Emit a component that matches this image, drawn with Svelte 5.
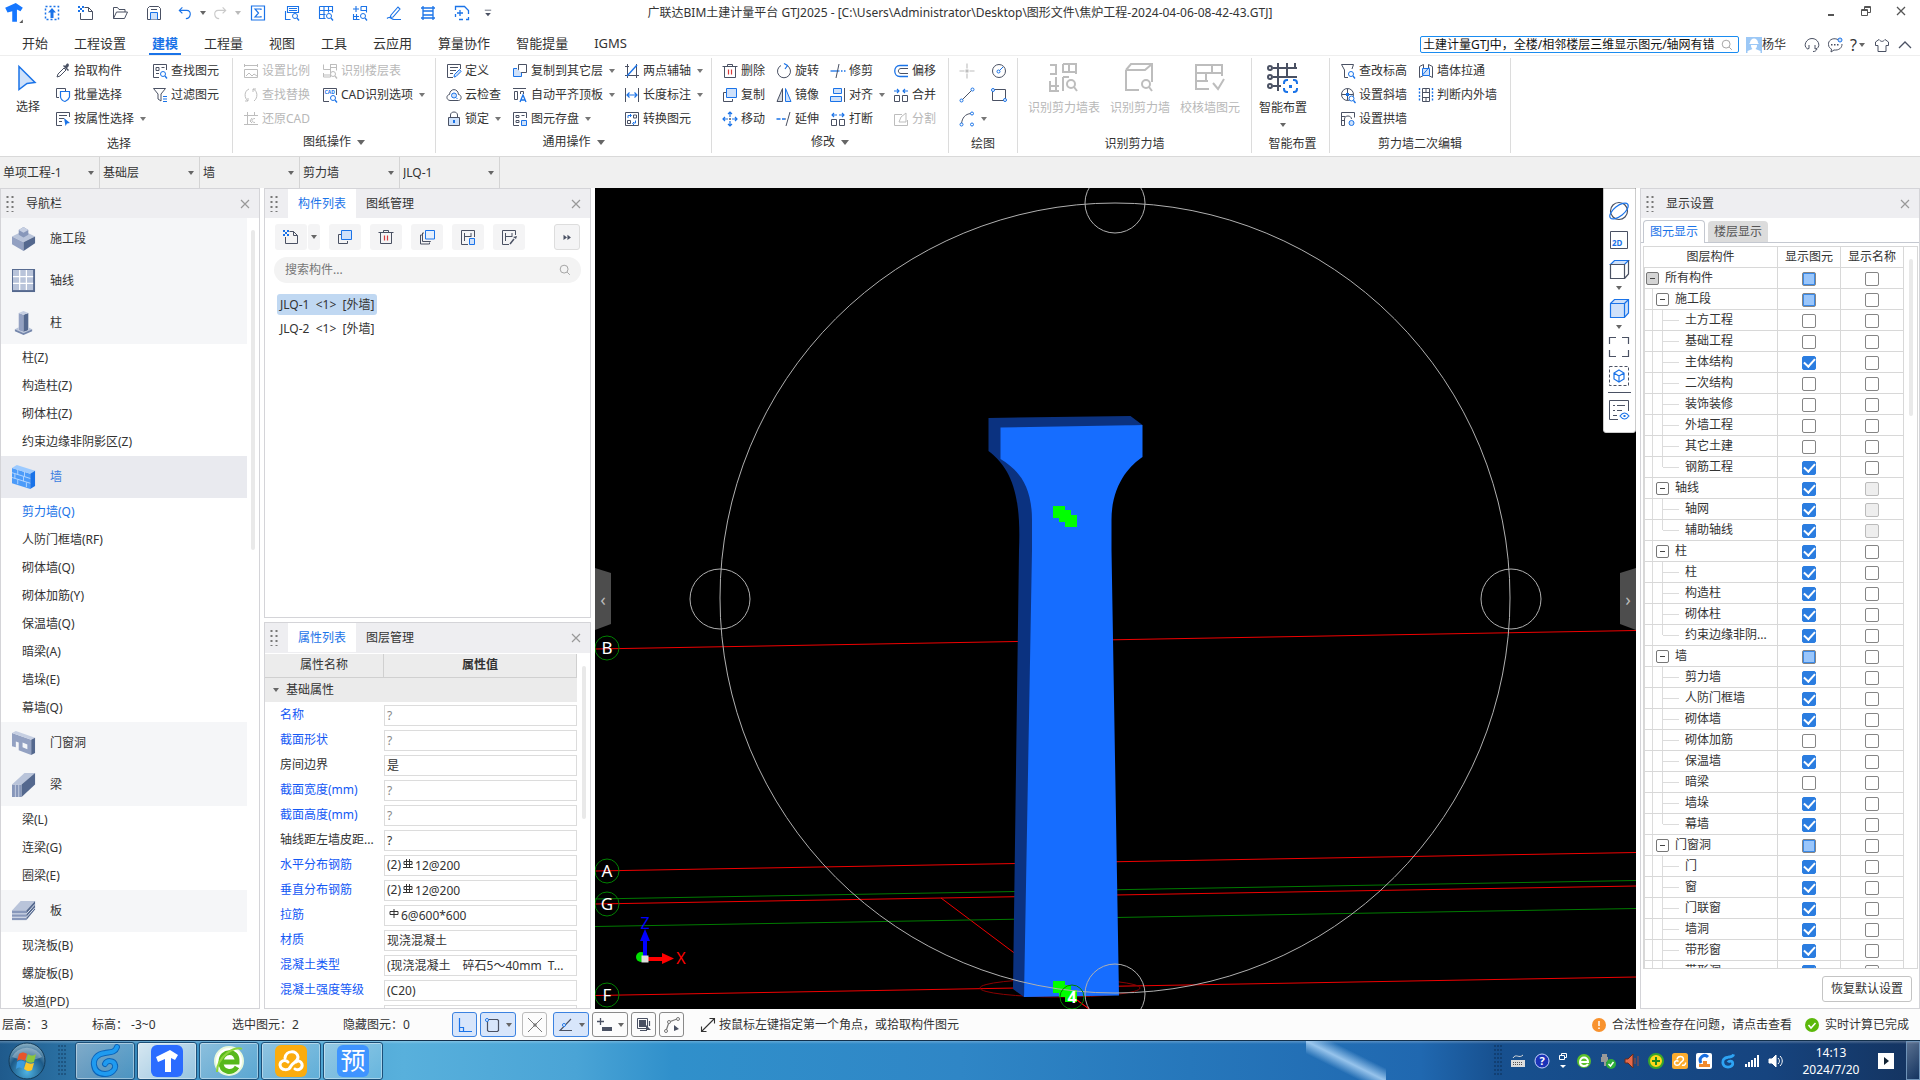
<script>
  const D = '#4a5163', B = '#1a73e8', L = '#cfe1fa', G = '#bdbdbd', R = '#d93a3a';
  const s = (c, d, f = 'none', w = 1) => `<path d="${d}" stroke="${c}" fill="${f}" stroke-width="${w}"/>`;
  const f = (c, d) => `<path d="${d}" fill="${c}" stroke="none"/>`;
  const mag = (c, x = 11, y = 11) => `<circle cx="${x}" cy="${y}" r="2.5" stroke="${c}" fill="#fff"/>` + s(c, `M${x + 2} ${y + 2}l2 2.5`, 'none', 1.3);
  const dot = (c, x, y) => `<circle cx="${x}" cy="${y}" r="1.5" stroke="${c}" fill="#fff"/>`;

  const icons = {
    logo: f('#1677ff', 'M1 4L10 0l6 4-2 3-3-1.500L11 16H7V7L3 8z') + f('#555', 'M16 14v3h-3z'),
    pickup: s(B, 'M1.500 1.500h13v13h-13z', 'none', 1.5).replace('/>', ' stroke-dasharray="2 2"/>') + f(B, 'M8 3l4 4.500H9.500V13h-3V7.500H4z'),
    newfile: s(D, 'M6.500 2.500h4l4 4v8h-12V8M10.500 2.500v4h4') + f(B, 'M0 1h2v2H0zM4 1h2v2H4zM2 3h2v2H2zM0 5h2v2H0zM4 5h2v2H4z'),
    open: s(D, 'M1.500 13.500v-11h4l1.500 2h6v2.500M1.500 13.500l3-6.500h11l-3 6.500z'),
    save: s(D, 'M1.500 3.500l2-2h9l2 2v11h-13z') + s(B, 'M4.500 14.500v-7h7v7', L) + s(D, 'M5 4.500h6'),
    undo: s(B, 'M5 1.500L1.500 5 5 8.500M2 5h8c6 0 5 9-1 9.500', 'none', 1.3),
    redo: s(G, 'M11 1.500L14.500 5 11 8.500M14 5H6c-6 0-5 9 1 9.500', 'none', 1.3),
    sigma: s(B, 'M1.500 1h13v14h-13zM11 5V4H5l3.500 4L5 12h6v-1', 'none', 1.2),
    report: s(B, 'M3.500 1.500h11v6h-11zM5 3.500h8M5 5.500h8M1.500 6v8.500h5', 'none', 1.1) + mag(B),
    tableq: s(B, 'M1.500 1.500h13v6M1.500 1.500v12h6M1.500 5.500h13M1.500 9.500h6M6 1.500v12M10.500 1.500v6', 'none', 1.1) + mag(B),
    compq: s(B, 'M9 1.500h5.500v6M9 1.500v4h5.500M1.500 9v5.500h6M1.500 11.500H7M4.500 9v5.500M4 1v6M1 4h6', 'none', 1.1) + mag(B),
    brush: s(B, 'M5 10l7-8 2 2-7 8-3 .5zM1 13.500c3-3 4 1 7 1h7', 'none', 1.1),
    ladder: s(B, 'M3 1v14M13 1v14M1 3h14M3 6h10M3 10h10M1 13h14', 'none', 1.3),
    fitdoc: s(B, 'M1.500 5V1.500h9l4 4V9M1.500 9v3M5 14.500h4M14.500 12v2.500H12M6 5v6M3 8h6', 'none', 1.3),
    drop: s(D, 'M1 1.500h8') + f(D, 'M1.500 5h7L5 9z'),

    picker: s(D, 'M2 14l1-3 6-6 2 2-6 6z') + f(D, 'M8 3l5 5 1-1-2-2c3-2 2-5 0-4.500L10 3 9 2z'),
    batch: s(D, 'M4 10.500H1.500v-9h9V4') + s(B, 'M5.500 4.500h9v5.500c-1 3-3 4-4.500 4.500-2-.5-4-2-4.500-4.500z', '#fff', 1.2),
    byprop: s(D, 'M14.500 6V1.500h-13v13H7M4 4.500h8M4 7.500h5M4 10.500h3') + f(B, 'M9 7l6 5-3 .5-1.500 2.500z'),
    findel: s(D, 'M7 14.500H1.500v-13h13V7M4 4.500h3v3H4zM9.500 4.500h3M4 10.500h3') + mag(B),
    filter: s(D, 'M1.500 1.500h12L9 7v7l-3-2V7z') + s(B, 'M11 9.500h4M11 12h4M11 14.500h4', 'none', 1.2),
    scale: s(G, 'M1.500 1v3M14.500 1v3M1.500 2.500h13M1.500 6.500h13v8h-13zM3 13l3-3 3 3 2-2 3 2'),
    floorq: s(G, 'M8.500 1v13M1.500 1.500v5H8M8.500 1.500h6v6M8.500 4.500h6M1.500 10v4h7M1.500 12h7') + mag(G),
    replace: s(G, 'M6 2C1 4 1 11 5 14M10 2c5 2 5 9 1 12M5 14H2M5 14v-3M10 2h3M10 2v3'),
    restore: s(G, 'M4.500 1v13M1 4.500h14M11.500 1v4M1 13.500h14M12 7.500c-4 0-4 4 0 4M9 7l-2 3 2 2'),
    cadopt: s(D, 'M7 14.500H1.500v-13h13V8') + `<text x="2.500" y="7" font-size="5" font-weight="700" fill="${B}">CAD</text>` + mag(B),
    define: s(D, 'M14.500 6V1.500h-13v13H7M4 4.500h8M4 7.500h6M4 10.500h3') + s(B, 'M8 14l.5-2.500 5-5 1.500 2-5 5z', L),
    cloud: s(D, 'M4 13.500C0 13 0 8 3.500 7.500 4 1 12 1 12.500 7.500c3.500.5 3.500 5.500 0 6z') + `<circle cx="8" cy="8.500" r="2.500" stroke="${B}" fill="${L}"/>` + s(B, 'M10 10.500l1.500 1.500'),
    lock: s(D, 'M2.500 6.500h11v8h-11z', L) + s(D, 'M4.500 6V4c0-4 7-4 7 0v2') + f(B, 'M7 9h2v3H7z'),
    copyup: s(D, 'M6.500 1.500h8v8h-8z', '#fff') + s(B, 'M5 5.500H1.500v8h8V10', L),
    alignroof: s(D, 'M1 1.500h13M2.500 4.500h3v8h-3zM8.500 7V4.500h3V7') + s(B, 'M8 15l3-7 3 7M9 13h4', 'none', 1.3),
    storage: s(D, 'M7 14.500H1.500v-13h13V7M4 4.500h3v2H4zM9.500 4.500h3M4 9.500h3v2H4z') + s(B, 'M9.500 9.500h5v5h-5z', L),
    twopt: s(D, 'M3.500 1v14M12.500 1v14M1 12.500h14M1 3.500h4') + s(B, 'M3 13L13 2', 'none', 1.4),
    dimlen: s(D, 'M1.500 1v14M14.500 1v14') + s(B, 'M3 8h10M5.500 5.500L3 8l2.500 2.500M10.500 5.500L13 8l-2.500 2.500', 'none', 1.2),
    convert: s(D, 'M1.500 1.500h13v13h-13z') + s(D, 'M9.500 4h3v3h-3zM3.500 9.500h3v3h-3z') + s(B, 'M4 7V4.500h3M9 12h2.500V9.500M6 3l1.500 1.500L6 6M10 11l-1.500 1.500L10 14'),

    trash: s(D, 'M2.500 4v10.500h11V4M.500 3.500h15M5.500 3V1.500h5V3') + s(R, 'M6.500 6.500v5M9.500 6.500v5', 'none', 1.2),
    copy: s(D, 'M4 5.500H1.500v9h9V12') + s(B, 'M4.500 1.500h10v9h-10z', L),
    move: s(B, 'M8 1v5M8 10v5M1 8h5M10 8h5M6 3l2-2 2 2M6 13l2 2 2-2M3 6L1 8l2 2M13 6l2 2-2 2', 'none', 1.2) + s(D, 'M7 8h2M8 7v2'),
    rotate: s(D, 'M11 2.500a6.500 6.500 0 1 1-6 0') + s(B, 'M8 .5L11.500 2.500 9 6', 'none', 1.2),
    mirror: s(D, 'M6.500 1.500v13h-5.500z', '#d7dbe2') + s(B, 'M9.500 1.500v13h5.500z', L),
    extend: s(B, 'M.5 8h4M6 8h3', 'none', 1.3) + s(D, 'M14 1l-4 14M10 8h-1'),
    trim: s(B, 'M.5 8h9', 'none', 1.3) + s(D, 'M9 1L6 15') + s(B, 'M11 8h1.500M14 8h1.500', 'none', 1.3),
    align: s(B, 'M3.500 1.500h8v5h-8zM.500 9.500h11v5h-11z', L) + s(D, 'M14.500 1v14'),
    breakk: s(D, 'M1.500 8.500h5v6h-5zM9.500 8.500h5v6h-5z') + s(B, 'M7 4H2M4 2L2 4l2 2M9 4h5M12 2l2 2-2 2', 'none', 1.1),
    offset: s(B, 'M15 2.500H7c-7 0-7 11 0 11h8', 'none', 1.3) + s(D, 'M15 5.500H8c-3.500 0-3.500 5 0 5h7'),
    merge: s(D, 'M1.500 8.500h5v6h-5zM9.500 8.500h5v6h-5z') + s(B, 'M1 4h5M4 2l2 2-2 2M15 4h-5M12 2l-2 2 2 2', 'none', 1.1),
    split: s(G, 'M9 3.500H1.500v11h13V9M6 11l2-5 5-4v9z'),
    point: s(G, 'M8 .5v5M8 10.500v5M.5 8h5M10.500 8h5', 'none', 1.1) + f(G, 'M6.500 6.500h3v3h-3z'),
    circle: `<circle cx="8" cy="8" r="6.500" stroke="${D}"/>` + s(B, 'M8 8l4-4') + dot(B, 7.5, 8.5),
    line: s(D, 'M3 13L13 3') + dot(B, 2.5, 13.5) + dot(B, 13.5, 2.5),
    rect: s(D, 'M1.500 2.500h13v11h-13z') + dot(B, 2, 3) + dot(B, 14, 13),
    arc: s(D, 'M2.500 13C3 7 6 3 12 2.500') + dot(B, 2.5, 13.5) + dot(B, 13, 2.5) + dot(B, 13, 13.5),
    checkelev: s(D, 'M8 14.500H4.500V7L1.500 1.500h12L12 6') + mag(B),
    slope: `<circle cx="7.500" cy="7.500" r="6" stroke="${D}"/>` + s(D, 'M1.500 7.500h12M7.500 1.500v12') + f(B, 'M6 6h3v3H6z') + mag(B, 11.5, 11.5),
    arch: s(D, 'M1.500 14.500v-13h13v5M4.500 14.500V8c0-4 7-4 7 0M1.500 5.500h4M1.500 9.500h3M1.500 14.500h3') + `<circle cx="11.500" cy="12" r="2.500" stroke="${B}" fill="${L}"/>`,
    wallthru: s(D, 'M1.500 3.500l4-2v11l-4 2zM10.500 1.500l4 2v11l-4-2z') + s(B, 'M4.500 5.500h7v7h-7zM4.500 12L11 4.500', L),
    inout: s(B, 'M1.500 1v14M14.500 1v14', 'none', 1.4).replace('/>', ' stroke-dasharray="2 1.500"/>') + s(D, 'M4.500 1.500h7v13h-7zM4.500 5.500h7M4.500 10.500h7M8 1.500v4M8 10.500v4'),

    cursor: s(B, 'M4 1.500L20 17.500l-8 1-8 6z', L, 1.5),
    shearT: s(G, 'M8 2v10H2M15 2h13v10M15 2v8h13M21 2v8M2 19v10h9M2 24h9M8 15v14M15 15v14M2 3h6M15 15h6', 'none', 2) + `<circle cx="23" cy="22" r="4" stroke="${G}" stroke-width="2"/>` + s(G, 'M26 25l3 4', 'none', 2),
    shear: s(G, 'M2 8l5-6h21v18M2 8h19l7-6M2 8v20h13', 'none', 2) + `<circle cx="22" cy="22" r="4" stroke="${G}" stroke-width="2"/>` + s(G, 'M25 25l3 4', 'none', 2),
    check: s(G, 'M28 14V3H2v24h13M2 11h26M2 19h12M18 3v8M12 11v8M19 21l5 6 6-10', 'none', 2),
    smart: s(D, 'M6 6h24M6 15h24M6 24h8M11 1v28M20 1v15M28 1v5', 'none', 2) + `<g stroke="${D}" stroke-width="2" fill="#fff"><circle cx="3" cy="6" r="2"/><circle cx="3" cy="15" r="2"/><circle cx="3" cy="24" r="2"/></g><rect x="15" y="17" width="16" height="14" fill="#fff"/>` + s(B, 'M17 22v-1q0-3 3-3h1M26 18h1q3 0 3 3v1M30 26v1q0 3-3 3h-1M21 30h-1q-3 0-3-3v-1', 'none', 2) + f(B, 'M22 23h3v3h-3z'),

    dupe: s(D, 'M3 6H1.500v9h9v-1.500M5 4H3.500v8.500h8V12') + s(B, 'M6.500 1.500h9v8.500h-9z', '#e4effe'),
    hdoc: s(D, 'M8 15.500H1.500v-14h13V8M4.500 4v8M11 4v4M4.500 7.500H11') + s(B, 'M9.500 9.500h5v6h-5z', L),
    hpick: s(D, 'M8 15.500H1.500v-14h13V6M4.500 4v8M11 4v4M4.500 7.500H11') + s(D, 'M9 15l4-5', 'none', 1.5) + f(D, 'M12 8l3 2 1-3z'),
    more: f(D, 'M4 5.500l4 3-4 3zM8.500 5.500l4 3-4 3z'),
    search: `<circle cx="7" cy="7" r="4.500" stroke="#999"/>` + s('#999', 'M10.500 10.500l3 3'),
    close: s('#999', 'M4 4l8 8M12 4l-8 8', 'none', 1.2),

    min: s('#555', 'M5 12h6', 'none', 2),
    restorew: s('#555', 'M6.500 6V3.500h6v6H10M3.500 6.500h6v6h-6zM3.500 7.500h6M6.500 4.500h6'),
    closew: s('#555', 'M4 4l8 8M12 4l-8 8', 'none', 1.3),
    headset: s(D, 'M3 11.500C-1 9 2 1.500 8 1.500s9 7 5 10l-2 .5V8M3 12l2-.5V8M13 12c-1 2-2 2.500-4 2.500'),
    chat: s(D, 'M11 2.500C5 0 1 4 1.500 7.500c0 3 2 4 3 4.500l-.5 3 3-2c5 .5 8-2 8-6') + f(D, 'M4 7h1.500v1.500H4zM7 7h1.500v1.500H7zM10 7h1.500v1.500H10z') + `<circle cx="13" cy="3" r="2" stroke="${B}" fill="${L}"/>`,
    shirt: s(D, 'M5 2.500L1.500 5v3.500H4v6h8v-6h2.500V5L11 2.500C9 5 7 5 5 2.500z'),
    up: s(D, 'M2 11l6-6 6 6', 'none', 1.3),

    expand: s('#333', 'M1.500 14.500l13-13M9.500 1.500h5v5M1.500 9.500v5h5', 'none', 1.1),
    ortho: s(B, 'M2.500 1v13.500H15M2.500 10.500h4v4', 'none', 1.2),
    snaprect: s(D, 'M4.500 2.500h9l1 1v10l-1 1h-9l-1-1v-10z', 'none', 1.2) + dot(B, 3, 3),
    cross: s('#777', 'M1 1l14 14M15 1L1 15M6 8h4M8 6v4'),
    angle: s(D, 'M14 2L3 13.500h12', 'none', 1.1) + dot(B, 7, 8),
    plusbox: s(D, 'M1 4.500h7M4.500 1v7', 'none', 1.3) + f(D, 'M6 10h10v4H6z'),
    multi: s(D, 'M1.500 1.500h10v10h-10z') + f(D, 'M3 3h7v7H3z') + s(D, 'M4 13.500h7M13.500 4v5', 'none', 1.2) + f(D, 'M10 8l5 5h-5z'),
    polyc: s('#777', 'M2 14L5 5l8-3', 'none', 1.2) + dot('#777', 2, 14) + dot('#777', 5, 5) + dot('#777', 14, 2) + f(D, 'M10 8l5 4-5 2z'),

    orbit: `<circle cx="10" cy="10" r="8.500" stroke="${D}" stroke-width="1.200"/><ellipse cx="10" cy="10" rx="11" ry="5" transform="rotate(-38 10 10)" stroke="${B}" stroke-width="1.200"/>`,
    twod: s(D, 'M1.500 1.500h17v17h-17z') + `<text x="3" y="16" font-size="8" font-weight="700" fill="${B}">2D</text>`,
    cube: s(B, 'M1.500 5.500l4-4h14l-4 4z', L, 1.2) + s(D, 'M1.500 5.500h14v14h-14zM19.500 1.500V15l-4 4.500', 'none', 1.2),
    cubef: s(B, 'M1.500 5.500l4-4h14V15l-4 4.500h-14zM1.500 5.500h14v14M15.500 5.500l4-4', L, 1.2),
    fullscreen: s(D, 'M7 .5H.5V7M13 .5h6.500V7M.5 13v6.500H7M19.500 13v6.500H13', 'none', 1.2),
    selcube: s(D, 'M.5.5h19v19H.5z').replace('/>', ' stroke-dasharray="3 2"/>') + s(B, 'M10 4l5 3v6l-5 3-5-3V7zM5 7l5 3 5-3M10 10v6', 'none', 1.2),
    listeye: s(D, 'M9 19.500H.500V.500h19V11M4 5.500h2M8 5.500h8M4 10.500h2M8 10.500h5M4 15.500h4') + s(B, 'M11 16c3-4 6-4 9 0-3 4-6 4-9 0z', '#fff', 1.2) + f(B, 'M14.500 15h2v2h-2z'),

    n_stage: f('#b9c4da', 'M0 10l12-6 12 6-12 6z') + f('#93a1c2', 'M0 10l12 6v9L0 18z') + f('#54688e', 'M24 10l-12 6v9l12-8z') + f('#8797ba', 'M7 3l5-3 5 3v5l-5 3-5-3z') + f('#c6cfe2', 'M7 3l5-3 5 3-5 3z'),
    n_axis: f('#54688e', 'M0 0h24v24H0z') + f('#b9c4da', 'M1 1h21v21H1z') + s('#fff', 'M8 1v21M15 1v21M1 8h21M1 15h21', 'none', 1.3),
    n_col: f('#93a1c2', 'M7 2l5 2v18l-5-2z') + f('#54688e', 'M17 2l-5 2v18l5-2z') + f('#c6cfe2', 'M7 2l5-2 5 2-5 2z') + f('#b9c4da', 'M3 19l4-2v3l5 2 5-2v-3l4 2-9 4z') + f('#7486ab', 'M3 19l9 4 9-4v2l-9 4-9-4z'),
    n_wall: f('#4c9bf9', 'M0 3l19 6v16L0 19z') + f('#9ccaff', 'M0 3l5-3 19 6-5 3z') + f('#1a73e8', 'M19 9l5-3v16l-5 3z') + s('#b4d6ff', 'M0 8l19 6M0 13l19 6M6 5v5M12 12v5M6 15v5M13 7v5M15 18v5M3 9v5'),
    n_door: f('#93a1c2', 'M0 2l20 7v16l-13-5v-8l-3-1v6L0 16z') + f('#c6cfe2', 'M0 2l4-2 20 7-4 2z') + f('#54688e', 'M20 9l4-2v16l-4 2z') + f('#f4f6f9', 'M11 12l5 2v5l-5-2z'),
    n_beam: f('#8797ba', 'M0 12h10v13H0z') + f('#b9c4da', 'M0 12L13 0h11L10 12z') + f('#54688e', 'M10 12L24 0v12L10 25z') + s('#c6cfe2', 'M3.500 12v13M7 12v13'),
    n_slab: f('#b9c4da', 'M0 12L9 2h15l-9 10z') + f('#8797ba', 'M0 12h15v10H0z') + f('#54688e', 'M15 12l9-10v9l-9 11z') + s('#e6ebf5', 'M0 15.500h15l9-10M0 19h15l9-10')
  };

  const quick = [['pickup', '拾取'], ['newfile', '新建'], ['open', '打开'], ['save', '保存']];
  const quick2 = [['sigma', '汇总计算'], ['report', '查看报表'], ['tableq', '查看工程量'], ['compq', '查看计算式'], ['brush', '标记'], ['ladder', '钢筋三维'], ['fitdoc', '适应窗口']];
  const tabs = ['开始', '工程设置', '建模', '工程量', '视图', '工具', '云应用', '算量协作', '智能提量', 'IGMS'];

  // Ribbon item: [icon, label, hasMenu, disabled]
  const groups = [
    { cls: 'g-select', cap: '选择', big: [['cursor', '选择']], cols: [
      [['picker', '拾取构件'], ['batch', '批量选择'], ['byprop', '按属性选择', 1]],
      [['findel', '查找图元'], ['filter', '过滤图元']]] },
    { cls: 'g-sheet', cap: '图纸操作', menu: 1, cols: [
      [['scale', '设置比例', 0, 1], ['replace', '查找替换', 0, 1], ['restore', '还原CAD', 0, 1]],
      [['floorq', '识别楼层表', 0, 1], ['cadopt', 'CAD识别选项', 1]]] },
    { cls: 'g-common', cap: '通用操作', menu: 1, cols: [
      [['define', '定义'], ['cloud', '云检查'], ['lock', '锁定', 1]],
      [['copyup', '复制到其它层', 1], ['alignroof', '自动平齐顶板', 1], ['storage', '图元存盘', 1]],
      [['twopt', '两点辅轴', 1], ['dimlen', '长度标注', 1], ['convert', '转换图元']]] },
    { cls: 'g-modify', cap: '修改', menu: 1, cols: [
      [['trash', '删除'], ['copy', '复制'], ['move', '移动']],
      [['rotate', '旋转'], ['mirror', '镜像'], ['extend', '延伸']],
      [['trim', '修剪'], ['align', '对齐', 1], ['breakk', '打断']],
      [['offset', '偏移'], ['merge', '合并'], ['split', '分割', 0, 1]]] },
    { cls: 'g-draw', cap: '绘图', cols: [
      [['point', '', 0, 1], ['line', ''], ['arc', '', 1]],
      [['circle', ''], ['rect', '']]] },
    { cls: 'g-identify', cap: '识别剪力墙', big: [['shearT', '识别剪力墙表', 0, 1], ['shear', '识别剪力墙', 0, 1], ['check', '校核墙图元', 0, 1]], cols: [] },
    { cls: 'g-smart', cap: '智能布置', big: [['smart', '智能布置', 1]], cols: [] },
    { cls: 'g-second', cap: '剪力墙二次编辑', cols: [
      [['checkelev', '查改标高'], ['slope', '设置斜墙'], ['arch', '设置拱墙']],
      [['wallthru', '墙体拉通'], ['inout', '判断内外墙']]] }
  ];

  const combos = [['工程', '单项工程-1'], ['楼层', '基础层'], ['类别', '墙'], ['构件类型', '剪力墙'], ['构件', 'JLQ-1']];

  const nav = [
    { icon: 'n_stage', name: '施工段' }, { icon: 'n_axis', name: '轴线' },
    { icon: 'n_col', name: '柱', kids: ['柱(Z)', '构造柱(Z)', '砌体柱(Z)', '约束边缘非阴影区(Z)'] },
    { icon: 'n_wall', name: '墙', on: 1, kids: ['剪力墙(Q)', '人防门框墙(RF)', '砌体墙(Q)', '砌体加筋(Y)', '保温墙(Q)', '暗梁(A)', '墙垛(E)', '幕墙(Q)'] },
    { icon: 'n_door', name: '门窗洞' },
    { icon: 'n_beam', name: '梁', kids: ['梁(L)', '连梁(G)', '圈梁(E)'] },
    { icon: 'n_slab', name: '板', kids: ['现浇板(B)', '螺旋板(B)', '坡道(PD)'] }
  ];

  const listTools = [['copy', '复制'], ['trash', '删除'], ['dupe', '层间复制'], ['hdoc', '存档'], ['hpick', '提取']];
  const components = ['JLQ-1  <1>  [外墙]', 'JLQ-2  <1>  [外墙]'];

  // Property row: [name, value, nameIsBlue, valueIsMuted, rebarMark]
  const props = [
    ['名称', '?', 1, 1], ['截面形状', '?', 1, 1], ['房间边界', '是'], ['截面宽度(mm)', '?', 1, 1], ['截面高度(mm)', '?', 1, 1],
    ['轴线距左墙皮距...', '?'], ['水平分布钢筋', '12@200', 1, 0, 'c'], ['垂直分布钢筋', '12@200', 1, 0, 'c'], ['拉筋', '6@600*600', 1, 0, 'a'],
    ['材质', '现浇混凝土', 1], ['混凝土类型', '(现浇混凝土　碎石5～40mm  T...', 1], ['混凝土强度等级', '(C20)', 1], ['', '']
  ];

  // Layer row: [name, level, shown (0 off, 1 on, 2 partial), nameDisabled, lastChild]
  const layers = [
    ['所有构件', 0, 2], ['施工段', 1, 2], ['土方工程', 2, 0], ['基础工程', 2, 0], ['主体结构', 2, 1], ['二次结构', 2, 0], ['装饰装修', 2, 0],
    ['外墙工程', 2, 0], ['其它土建', 2, 0], ['钢筋工程', 2, 1, 0, 1], ['轴线', 1, 1, 1], ['轴网', 2, 1, 1], ['辅助轴线', 2, 1, 1, 1],
    ['柱', 1, 1], ['柱', 2, 1], ['构造柱', 2, 1], ['砌体柱', 2, 1], ['约束边缘非阴...', 2, 1, 0, 1], ['墙', 1, 2], ['剪力墙', 2, 1],
    ['人防门框墙', 2, 1], ['砌体墙', 2, 1], ['砌体加筋', 2, 0], ['保温墙', 2, 1], ['暗梁', 2, 0], ['墙垛', 2, 1], ['幕墙', 2, 1, 0, 1],
    ['门窗洞', 1, 2], ['门', 2, 1], ['窗', 2, 1], ['门联窗', 2, 1], ['墙洞', 2, 1], ['带形窗', 2, 1], ['带形洞', 2, 1]
  ];

  const axes = [['B', 648], ['A', 871], ['G', 904], ['F', 995]];
  const modes = [['ortho', '正交', 1, 0], ['snaprect', '捕捉', 1, 1], ['cross', '交点', 0, 0, 1], ['angle', '角度', 1, 1], ['plusbox', '偏移输入', 0, 1], ['multi', '多选', 0, 0], ['polyc', '折线', 0, 0]];
</script>

{#snippet ic(name, size = 16, box = 16)}
  <svg class="ic" width={size} height={size} viewBox="0 0 {box} {box}" fill="none" aria-hidden="true">{@html icons[name]}</svg>
{/snippet}

{#snippet grip()}
  <svg class="grip" width="8" height="18" viewBox="0 0 8 18" aria-hidden="true">
    <path d="M1.500 1v16M6.500 1v16" stroke="#777" stroke-width="2" stroke-dasharray="2 3" />
  </svg>
{/snippet}

<div class="app">
  <header>
    <div class="title">
      <div class="quick">
        <span class="logo">{@render ic('logo', 20, 17)}</span>
        {#each quick as [i, t]}<button class="qb" aria-label={t}>{@render ic(i)}</button>{/each}
        <button class="qb split" aria-label="撤销">{@render ic('undo', 14)}<i class="tri"></i></button>
        <button class="qb split off" aria-label="重做">{@render ic('redo', 14)}<i class="tri"></i></button>
        {#each quick2 as [i, t]}<button class="qb" aria-label={t}>{@render ic(i)}</button>{/each}
        <button class="qb thin" aria-label="自定义">{@render ic('drop', 8, 10)}</button>
      </div>
      <h1>广联达BIM土建计量平台 GTJ2025 - [C:\Users\Administrator\Desktop\图形文件\焦炉工程-2024-04-06-08-42-43.GTJ]</h1>
      <div class="win">
        <button aria-label="最小化">{@render ic('min')}</button>
        <button aria-label="还原">{@render ic('restorew')}</button>
        <button aria-label="关闭">{@render ic('closew')}</button>
      </div>
    </div>

    <div class="menu">
      <nav>
        {#each tabs as t}<button class:on={t === '建模'}>{t}</button>{/each}
      </nav>
      <div class="account">
        <label class="help"><input aria-label="搜索帮助" value="土建计量GTJ中，全楼/相邻楼层三维显示图元/轴网有错" />{@render ic('search', 14)}</label>
        <button class="user">
          <svg width="16" height="16" viewBox="0 0 16 16" aria-hidden="true"><rect width="16" height="16" fill="#9cc8f6" /><path d="M4 6c0-6 8-6 8 0l1 1H3zM5 8h6c0 3-1 3-1.500 4l5 2v2h-13v-2l5-2C6 11 5 11 5 8z" fill="#fff" /></svg>杨华
        </button>
        <div class="tools">
          <button aria-label="客服">{@render ic('headset')}</button>
          <button aria-label="消息">{@render ic('chat')}</button>
          <button class="q" aria-label="帮助">?<i class="tri"></i></button>
          <button aria-label="皮肤">{@render ic('shirt')}</button>
          <button aria-label="收起功能区">{@render ic('up')}</button>
        </div>
      </div>
    </div>

    <div class="ribbon">
      {#each groups as g}
        <section class="group {g.cls}">
          <div class="body">
            {#each g.big ?? [] as [i, t, m, d]}
              <button class="big" disabled={!!d}>{@render ic(i, i === 'cursor' ? 26 : 32, i === 'cursor' ? 26 : 32)}<span>{t}</span>{#if m}<i class="tri"></i>{/if}</button>
            {/each}
            {#each g.cols as col}
              <div class="col">
                {#each col as [i, t, m, d]}
                  <button class="item" disabled={!!d} aria-label={t || i}>{@render ic(i)}{#if t}<span>{t}</span>{/if}{#if m}<i class="tri"></i>{/if}</button>
                {/each}
              </div>
            {/each}
          </div>
          <div class="cap" class:plain={!g.menu}>{g.cap}{#if g.menu}<i class="tri wide"></i>{/if}</div>
        </section>
      {/each}
    </div>

    <div class="combos">
      {#each combos as [l, v]}
        <label><select aria-label={l}><option>{v}</option></select><i class="tri"></i></label>
      {/each}
    </div>
  </header>

  <main>
    <aside class="panel nav">
      <div class="head">{@render grip()}<span class="name">导航栏</span><button class="x" aria-label="关闭导航栏">{@render ic('close')}</button></div>
      <div class="scroller">
        <div class="tree">
          {#each nav as n}
            <button class="cat" class:on={n.on}>{@render ic(n.icon, 24, 25)}<span>{n.name}</span></button>
            {#each n.kids ?? [] as k}<button class="kid" class:on={k === '剪力墙(Q)'}>{k}</button>{/each}
          {/each}
        </div>
        <div class="bar"></div>
      </div>
    </aside>

    <div class="mid">
      <section class="panel list">
        <div class="head">{@render grip()}<button class="tab on">构件列表</button><button class="tab">图纸管理</button><button class="x" aria-label="关闭构件列表">{@render ic('close')}</button></div>
        <div class="ltools">
          <button class="lb first" aria-label="新建构件">{@render ic('newfile')}</button><button class="lb drop" aria-label="新建菜单"><i class="tri"></i></button>
          {#each listTools as [i, t]}<button class="lb" aria-label={t}>{@render ic(i, 17, 17)}</button>{/each}
          <button class="lb more" aria-label="更多">{@render ic('more', 14)}</button>
        </div>
        <label class="find"><input aria-label="搜索构件" placeholder="搜索构件..." />{@render ic('search', 14)}</label>
        {#each components as c, i}<button class="comp" class:on={i === 0}>{c}</button>{/each}
      </section>

      <section class="panel props">
        <div class="head">{@render grip()}<button class="tab on">属性列表</button><button class="tab">图层管理</button><button class="x" aria-label="关闭属性列表">{@render ic('close')}</button></div>
        <div class="scroller">
          <div class="ptable">
            <div class="phead"><span>属性名称</span><b>属性值</b></div>
            <div class="psec"><i class="tri"></i>基础属性</div>
            {#each props as [n, v, blue, muted, mark], i}
              <div class="prow">
                <label for="p{i}" class:blue>{n}</label>
                <div class="field">
                  {#if mark === 'c'}<span>(2)</span>{/if}
                  {#if mark}
                    <svg class="rebar" width="12" height="14" viewBox="0 0 12 14" fill="none" stroke="#333" aria-hidden="true">
                      {#if mark === 'c'}<path d="M2 3.500h8v3h-8zM4.500 1v9M7.500 1v9M1 9.500h10" />{:else}<path d="M2 3.500h8v3h-8zM6 1v9" />{/if}
                    </svg>
                  {/if}
                  <input id="p{i}" class:muted value={v} />
                </div>
              </div>
            {/each}
          </div>
          <div class="bar"></div>
        </div>
      </section>
    </div>

    <section class="view">
      <svg class="scene" viewBox="595 188 1041 821" preserveAspectRatio="xMidYMid slice" fill="none" role="img" aria-label="三维视图">
        <path d="M595 649L1636 630.500M595 871L1636 852.500M595 904L1636 886M595 995.500L1636 977" stroke="#f00000" />
        <path d="M941 898l148 111" stroke="#f00000" />
        <ellipse cx="1060" cy="988" rx="80" ry="9" stroke="#8a0000" />
        <path d="M595 899L1636 880.500M595 926.500L1636 908.500" stroke="#007a00" />
        <path d="M988.500 418L1130.500 416l12 9L1060 430V560L1024 997l-11-8L1019 550C1021 500 1014 470 988.500 451z" fill="#0b3280" />
        <path d="M1000.500 427.500L1142.500 425v32c-12 8-31 27-31 63v30L1119 995.500 1024 997 1032 550v-30c0-36-15-51-31.500-61z" fill="#166dff" />
        <path d="M1053 506h12v4h6v5h6v12h-12v-5h-6v-4h-6zM1053 981h12v4h6v5h6v12h-12v-5h-6v-4h-6z" fill="#0f0" />
        <path d="M1077 1000l12 9" stroke="#f00000" />
        <g stroke="#b0b0b0">
          <circle cx="1115" cy="598" r="395" />
          <circle cx="1115" cy="203" r="30" /><circle cx="1115" cy="994" r="30" />
          <circle cx="720" cy="599" r="30" /><circle cx="1511" cy="599" r="30" />
        </g>
        {#each axes as [t, y]}
          <circle cx="607" cy={y} r="12" stroke="#008000" />
          <text x="607" y={y + 6} text-anchor="middle" font-size="17" fill="#fff">{t}</text>
        {/each}
        <circle cx="1072" cy="997" r="12" stroke="#008000" />
        <text x="1072" y="1003" text-anchor="middle" font-size="16" font-weight="700" fill="#fff">4</text>
        <circle cx="641" cy="957" r="5" fill="#00e000" />
        <path d="M645 957V938" stroke="#00f" stroke-width="4" /><path d="M640 941l5-12 5 12z" fill="#00f" />
        <path d="M647 959h17" stroke="#f00" stroke-width="4" /><path d="M662 953l12 5.500-12 5.500z" fill="#f00" />
        <path d="M641.500 955.500h7v7h-7z" fill="#ddd" />
        <text x="645" y="929" text-anchor="middle" font-size="16" fill="#00f">Z</text>
        <text x="681" y="964" text-anchor="middle" font-size="16" fill="#f00">X</text>
      </svg>
      <button class="fold left" aria-label="收起左侧">‹</button>
      <button class="fold right" aria-label="收起右侧">›</button>
      <div class="strip">
        <button aria-label="动态观察">{@render ic('orbit', 20, 20)}</button>
        <button aria-label="二维">{@render ic('twod', 20, 20)}</button>
        <button class="m" aria-label="视图方向">{@render ic('cube', 20, 20)}<i class="tri"></i></button>
        <button class="m" aria-label="显示方式">{@render ic('cubef', 20, 20)}<i class="tri"></i></button>
        <button aria-label="全屏">{@render ic('fullscreen', 20, 20)}</button>
        <button aria-label="局部三维">{@render ic('selcube', 20, 20)}</button>
        <hr />
        <button aria-label="显示设置">{@render ic('listeye', 20, 20)}</button>
      </div>
    </section>

    <aside class="panel layers">
      <div class="head">{@render grip()}<span class="name">显示设置</span><button class="x" aria-label="关闭显示设置">{@render ic('close')}</button></div>
      <div class="ltabs"><button class="on">图元显示</button><button>楼层显示</button></div>
      <div class="lbox">
        <table>
          <thead><tr><th>图层构件</th><th class="c">显示图元</th><th class="c">显示名称</th></tr></thead>
          <tbody>
            {#each layers as [n, lv, st, dis, last]}
              <tr>
                <td>
                  <div class="cell lv{lv}">
                    {#if lv > 0}<span class="guide"></span>{/if}
                    {#if lv === 2}<span class="guide two" class:last></span><span class="dash"></span>{:else}<button class="fold1" aria-label="折叠{n}"></button>{/if}
                    <span>{n}</span>
                  </div>
                </td>
                <td class="c"><input type="checkbox" aria-label="显示图元 {n}" checked={st === 1} indeterminate={st === 2} /></td>
                <td class="c"><input type="checkbox" aria-label="显示名称 {n}" disabled={!!dis} /></td>
              </tr>
            {/each}
          </tbody>
        </table>
        <div class="bar"></div>
      </div>
      <div class="foot"><button>恢复默认设置</button></div>
    </aside>
  </main>

  <div class="status">
    <span class="s1">层高： 3</span><span class="s2">标高： -3~0</span><span class="s3">选中图元：2</span><span class="s4">隐藏图元：0</span>
    <div class="modes">
      {#each modes as [i, t, on, m, dim]}
        <button class:on class:dim aria-label={t}>{@render ic(i)}{#if m}<i class="tri"></i>{/if}</button>
      {/each}
    </div>
    <span class="hint">{@render ic('expand')}按鼠标左键指定第一个角点，或拾取构件图元</span>
    <span class="note"><svg width="14" height="14" viewBox="0 0 14 14" aria-hidden="true"><circle cx="7" cy="7" r="7" fill="#f8922e" /><path d="M7 3v5M7 9.500v1.500" stroke="#fff" stroke-width="1.500" /></svg>合法性检查存在问题，请点击查看</span>
    <span class="note"><svg width="14" height="14" viewBox="0 0 14 14" fill="none" aria-hidden="true"><circle cx="7" cy="7" r="7" fill="#5cb80c" /><path d="M3.500 7l2.500 3 4.500-5" stroke="#fff" stroke-width="1.500" /></svg>实时计算已完成</span>
  </div>

  <footer>
    <button class="orb" aria-label="开始菜单">
      <svg width="38" height="38" viewBox="0 0 38 38" aria-hidden="true">
        <defs><radialGradient id="orb" cx="50%" cy="80%" r="80%"><stop offset="0" stop-color="#4fb4e4" /><stop offset=".6" stop-color="#1d5a88" /><stop offset="1" stop-color="#8fb4c8" /></radialGradient></defs>
        <circle cx="19" cy="19" r="18" fill="url(#orb)" stroke="#123a58" />
        <path d="M4 15a16 14 0 0 1 30 0c-8 4-20 4-30 0z" fill="#fff" opacity=".3" />
        <path d="M11 12c3-2 5-2 8 0l-2 7c-3-2-5-2-8 0z" fill="#e8542a" /><path d="M20 12c3 2 5 2 8 0l-2 8c-3 1-5 1-8-1z" fill="#8cc63e" />
        <path d="M9 20c3-2 5-2 8 0l-2 7c-3-2-5-2-7 0z" fill="#3b9be0" /><path d="M18 20c3 2 5 2 8 1l-2 7c-3 2-5 1-8-1z" fill="#fbc62a" />
      </svg>
    </button>
    <svg class="dots" width="8" height="32" viewBox="0 0 8 32" aria-hidden="true"><path d="M1 0v32M4 0v32M7 0v32" stroke="#123d63" stroke-width="1" stroke-dasharray="2 2" /></svg>
    <button class="task" aria-label="G 软件">
      <svg width="34" height="34" viewBox="0 0 34 34" fill="none" stroke-linecap="round" aria-hidden="true"><path d="M29 3c-2 6-7 5-12 6C9 10 5 15 6 21c1 7 6 9 11 9 7 0 11-5 10-9-1-5-8-5-10-1" stroke="#0b63b8" stroke-width="6" /><path d="M29 3c-2 6-7 5-12 6C9 10 5 15 6 21c1 7 6 9 11 9 7 0 11-5 10-9-1-5-8-5-10-1" stroke="#1f9bf0" stroke-width="4" /></svg>
    </button>
    <button class="task on" aria-label="GTJ"><svg width="32" height="32" viewBox="0 0 32 32" aria-hidden="true"><rect width="32" height="32" rx="6" fill="#2b6cff" /><path d="M5 12L19 5l8 5-3 5-4-2v14h-6V14l-7 3z" fill="#fff" /></svg></button>
    <button class="task" aria-label="浏览器"><svg width="32" height="32" viewBox="0 0 32 32" fill="none" aria-hidden="true"><circle cx="16" cy="16" r="14" fill="#fff" stroke="#e8f8dc" stroke-width="2" /><path d="M9 17h15c1-13-16-12-16 0 0 11 12 12 16 5" stroke="#57b81c" stroke-width="5" /><path d="M4 27C4 12 22 0 29 4" stroke="#8bd43c" stroke-width="2" /></svg></button>
    <button class="task" aria-label="云盘"><svg width="32" height="32" viewBox="0 0 32 32" fill="none" stroke-linecap="round" aria-hidden="true"><rect width="32" height="32" rx="6" fill="#fbac0e" /><path d="M10 13c1-8 12-8 13-1 0 5-5 5-7 9-2 5-10 5-11-1 0-4 5-6 8-3M20 24c4 2 8-1 7-5-1-3-4-4-6-2" stroke="#fff" stroke-width="3" /></svg></button>
    <button class="task" aria-label="预算"><svg width="32" height="32" viewBox="0 0 32 32" aria-hidden="true"><rect width="32" height="32" rx="6" fill="#3f94ff" /><text x="16" y="25" text-anchor="middle" font-size="25" fill="#fff">预</text></svg></button>

    <div class="tray">
      <svg class="dots" width="8" height="32" viewBox="0 0 8 32" aria-hidden="true"><path d="M1 0v32M4 0v32M7 0v32" stroke="#0d2f57" stroke-width="1" stroke-dasharray="2 2" /></svg>
      <svg width="16" height="16" viewBox="0 0 16 16" fill="none" aria-hidden="true"><path d="M1 7h14v7H1z" fill="#ddd" /><path d="M3 9.500h10M3 11.500h10" stroke="#555" stroke-dasharray="1 1" /><path d="M3 5c3-5 6 1 10-3" stroke="#ddd" /></svg>
      <svg width="16" height="16" viewBox="0 0 16 16" aria-hidden="true"><circle cx="8" cy="8" r="7" fill="#1b33b8" stroke="#c8d4ff" /><text x="8" y="12" text-anchor="middle" font-size="11" font-weight="700" fill="#fff">?</text></svg>
      <svg class="small" width="10" height="18" viewBox="0 0 10 18" fill="none" stroke="#fff" aria-hidden="true"><path d="M3.500 3V1.500h5v4H7M1.500 3.500h5v4h-5z" /><path d="M2 13h6l-3 3z" fill="#fff" stroke="none" /></svg>
      <svg width="16" height="16" viewBox="0 0 16 16" fill="none" aria-hidden="true"><circle cx="8" cy="8" r="7" fill="#5cc02c" /><path d="M4 9h8c0-6-8-6-8 0 0 5 6 5 8 2" stroke="#fff" stroke-width="2" /></svg>
      <svg width="16" height="16" viewBox="0 0 16 16" fill="none" aria-hidden="true"><path d="M2 1h5v3h1v5H6v4H4V9H1V4h1z" fill="#999" /><circle cx="11" cy="11" r="5" fill="#2fae3a" /><path d="M8.500 11l2 2 3-4" stroke="#fff" stroke-width="1.500" /></svg>
      <svg width="16" height="16" viewBox="0 0 16 16" fill="none" aria-hidden="true"><path d="M1 6h3l5-5v14L4 10H1z" fill="#e66a4a" stroke="#6a2a1a" /><path d="M11 5v6M14 3v10" stroke="#a04a3a" /></svg>
      <svg width="16" height="16" viewBox="0 0 16 16" aria-hidden="true"><circle cx="8" cy="8" r="7" fill="#ffd81a" stroke="#3aa52a" stroke-width="2" /><path d="M8 4v8M4 8h8" stroke="#1f8a1f" stroke-width="2" /></svg>
      <svg width="16" height="16" viewBox="0 0 32 32" fill="none" aria-hidden="true"><rect width="32" height="32" rx="5" fill="#fbac2e" /><path d="M10 13c1-8 12-8 13-1 0 5-5 5-7 9-2 5-10 5-11-1 0-4 5-6 8-3M20 24c4 2 8-1 7-5" stroke="#fff" stroke-width="3" /></svg>
      <svg width="16" height="16" viewBox="0 0 16 16" fill="none" aria-hidden="true"><rect width="16" height="16" rx="2" fill="#fff" /><path d="M12 4C8 0 2 5 5 10" stroke="#1a6fe0" stroke-width="3" /><path d="M3 14h11v-3h-3V8H7v3H3z" fill="#f08a2e" /></svg>
      <svg width="16" height="16" viewBox="0 0 34 34" fill="none" aria-hidden="true"><path d="M29 3c-2 6-7 5-12 6C9 10 5 15 6 21c1 7 6 9 11 9 7 0 11-5 10-9-1-5-8-5-10-1" stroke="#2ea4f4" stroke-width="6" /></svg>
      <svg width="16" height="16" viewBox="0 0 16 16" aria-hidden="true"><path d="M1 14v-3h2v3zM4 14V9h2v5zM7 14V7h2v7zM10 14V5h2v9zM13 14V2h2v12z" fill="#fff" /></svg>
      <svg width="16" height="16" viewBox="0 0 16 16" fill="none" stroke="#fff" aria-hidden="true"><path d="M1 6h3l4-4v12l-4-4H1z" fill="#fff" /><path d="M10 5c2 2 2 4 0 6M12 3c3 3 3 7 0 10" /></svg>
      <div class="clock"><span>14:13</span><span>2024/7/20</span></div>
      <svg width="16" height="16" viewBox="0 0 16 16" aria-hidden="true"><path d="M0 0h16v16H0z" fill="#fff" /><path d="M6 4l5 4-5 4z" fill="#123" /></svg>
      <button class="desk" aria-label="显示桌面"></button>
    </div>
  </footer>
</div>

<style>
  :global(body) { background: #f0f0f0; }
  .app {
    display: flex; flex-direction: column; height: 100vh; overflow: hidden;
    font: 12px/16px "Noto Sans", "Noto Sans CJK SC", sans-serif; color: #333;
  }
  .app :global(*) { box-sizing: border-box; }
  button, input, select { font: inherit; color: inherit; margin: 0; padding: 0; border: 0; background: none; }
  button { white-space: nowrap; cursor: pointer; }
  svg { flex: none; display: block; }
  .ic { overflow: visible; }
  .tri { flex: none; width: 0; height: 0; border: 3px solid transparent; border-top: 4px solid #666; border-bottom: 0; }
  .tri.wide { border-width: 5px 4px 0; }

  /* title and menu */
  header { flex: none; background: #fff; }
  .title { display: grid; grid-template-columns: 1fr auto 1fr; align-items: center; height: 26px; }
  h1 { margin: 0; font-size: 12px; font-weight: 400; white-space: nowrap; }
  .quick { display: flex; align-items: center; }
  .logo { padding: 0 18px 0 4px; }
  .qb { display: flex; align-items: center; justify-content: center; width: 34px; height: 24px; }
  .logo + .qb { margin-left: -7px; }
  .qb.split { gap: 8px; padding-left: 6px; width: 35px; }
  .qb.split.off { opacity: .8; }
  .qb.split.off .tri { border-top-color: #aaa; }
  .qb.thin { width: 18px; }
  .win { display: flex; justify-content: flex-end; gap: 19px; padding: 0 11px 4px 0; }
  .menu { display: flex; justify-content: space-between; height: 30px; border-bottom: 1px solid #eee; }
  nav { display: flex; gap: 20px; padding-left: 19px; }
  nav button { font-size: 13px; padding: 6px 3px 0; border-bottom: 2px solid transparent; }
  nav button.on { color: #1a73e8; font-weight: 700; border-color: #1a73e8; }
  .account { display: flex; align-items: center; padding: 8px 7px 0 0; height: 29px; }
  .help { display: flex; align-items: center; width: 319px; height: 17px; border: 1px solid #1a8cf0; border-radius: 2px; padding: 0 4px 0 2px; }
  .help input { flex: 1; min-width: 0; height: 15px; color: #111; outline: 0; }
  .user { display: flex; align-items: center; margin-left: 7px; }
  .tools { display: flex; align-items: center; gap: 7px; margin-left: 18px; }
  .q { display: flex; align-items: center; gap: 2px; width: 17px; font-size: 16px; }

  /* ribbon */
  .ribbon { display: flex; height: 101px; padding-top: 2px; border-bottom: 1px solid #d9d9d9; }
  .group { display: flex; flex-direction: column; height: 95px; border-right: 1px solid #dcdcdc; padding-left: 10px; }
  .body { display: grid; height: 73px; padding-top: 1px; }
  .col { display: flex; flex-direction: column; align-items: flex-start; }
  .item { display: flex; align-items: center; gap: 3px; height: 24px; }
  .item .tri { margin-left: 3px; border-top-color: #777; }
  .item:disabled, .big:disabled { color: #b8b8b8; }
  .big { display: flex; flex-direction: column; align-items: center; height: 72px; gap: 6px; padding-top: 3px; }
  .big .tri { margin-top: 1px; }
  .cap { display: flex; align-items: center; justify-content: center; gap: 6px; height: 22px; margin-left: -10px; }
  .cap.plain { padding-top: 3px; }
  .g-select { width: 233px; padding-left: 8px; }
  .g-select .body { grid-template-columns: 47px 97px auto; }
  .g-select .cap { margin-left: -2px; }
  .g-select .big { width: 40px; gap: 8px; padding-top: 6px; }
  .g-sheet { width: 203px; }
  .g-sheet .body { grid-template-columns: 79px auto; }
  .g-common { width: 276px; }
  .g-common .body { grid-template-columns: 66px 112px auto; }
  .g-modify { width: 237px; }
  .g-modify .body { grid-template-columns: 54px 54px 63px auto; }
  .g-draw { width: 69px; }
  .g-draw .body { grid-template-columns: 32px auto; }
  .g-identify { width: 234px; }
  .g-identify .body { grid-template-columns: 72px 60px 60px; column-gap: 10px; }
  .g-smart { width: 78px; padding-left: 7px; }
  .g-smart .cap { margin-left: -3px; }
  .g-smart .body { grid-template-columns: 48px; }
  .g-second { width: 181px; }
  .g-second .body { grid-template-columns: 78px auto; }

  .combos { display: flex; height: 31px; background: #f0f0f0; }
  .combos label { display: grid; width: 100px; align-items: center; border-right: 1px solid #d4d4d4; }
  .combos select { grid-area: 1 / 1; height: 31px; padding: 0 16px 0 3px; appearance: none; }
  .combos .tri { grid-area: 1 / 1; justify-self: end; margin-right: 5px; pointer-events: none; }

  /* panels */
  main { flex: 1; min-height: 0; display: flex; background: #fff; }
  .panel { display: flex; flex-direction: column; min-height: 0; background: #fff; border: 1px solid #d4d4d8; }
  .head { flex: none; display: flex; align-items: center; height: 29px; padding: 0 6px 0 5px; background: #eeeef1; }
  .head .name { margin-left: 12px; }
  .x { margin-left: auto; }
  .tab { height: 29px; padding: 0 10px; }
  .grip + .tab { margin-left: 10px; }
  .tab.on { background: #fff; color: #1a73e8; }
  .scroller { flex: 1; min-height: 0; display: flex; overflow: hidden; }
  .bar { flex: none; width: 4px; border-radius: 2px; background: #e9e9e9; }

  .nav { flex: none; width: 260px; }
  .tree { flex: 1; }
  .nav .bar { height: 320px; margin: 12px 4px 0 4px; }
  .cat { display: flex; align-items: center; gap: 14px; width: 100%; height: 42px; padding-left: 11px; background: #f5f6f8; }
  .cat.on { background: #e9eaef; color: #3b7de0; }
  .kid { display: block; width: 100%; height: 28px; padding: 0 0 0 21px; text-align: left; }
  .kid.on { color: #1a73e8; }

  .mid { flex: none; display: flex; flex-direction: column; gap: 4px; width: 327px; margin: 0 4px; }
  .list { flex: 430; }
  .props { flex: 387; }
  .props .head { height: 30px; }
  .ltools { display: flex; padding: 6px 10px 0; }
  .lb { display: flex; align-items: center; justify-content: center; width: 32px; height: 26px; margin-right: 9px; background: #f4f4f5; border-radius: 3px; }
  .lb.first { margin-right: 1px; }
  .lb.drop { width: 12px; }
  .lb.more { width: 26px; margin: 0 0 0 auto; border: 1px solid #ddd; }
  .find { display: flex; align-items: center; height: 26px; margin: 7px 9px 11px; padding: 0 9px 0 11px; border-radius: 13px; background: #f3f3f3; }
  .find input { flex: 1; min-width: 0; outline: 0; }
  .find input::placeholder { color: #777; opacity: 1; }
  .comp { align-self: flex-start; height: 21px; margin: 0 0 3px 12px; padding: 0 3px; border-radius: 3px; white-space: pre; }
  .comp.on { background: #c0d8f2; }

  .ptable { flex: 1; min-width: 0; padding-top: 1px; }
  .phead { display: grid; grid-template-columns: 119px 1fr; height: 24px; background: #ececec; border-bottom: 1px solid #d0d0d0; }
  .phead > * { display: grid; place-items: center; border-right: 1px solid #d0d0d0; }
  .psec { display: flex; align-items: center; gap: 7px; height: 24px; padding-left: 8px; margin-bottom: 1px; background: #ebebeb; }
  .prow { display: grid; grid-template-columns: 119px minmax(0, 1fr); align-items: center; height: 25px; }
  .prow label { padding-left: 15px; white-space: nowrap; }
  .prow label.blue { color: #1358f5; }
  .field { display: flex; align-items: center; height: 21px; border: 1px solid #dcdcdc; padding-left: 2px; }
  .field input { flex: 1; min-width: 0; height: 19px; outline: 0; white-space: pre; }
  .rebar { margin: 0 1px; }
  .muted { color: #888; }
  .props .bar { height: 153px; margin: 13px 4px 0 5px; }

  /* 3D view */
  .view { position: relative; flex: 1; min-width: 0; background: #000; }
  .scene { position: absolute; inset: 0; width: 100%; height: 100%; }
  .fold { position: absolute; top: 380px; width: 16px; height: 62px; background: #4d4d4d; color: #bbb; font-size: 18px; line-height: 56px; }
  .fold.left { left: 0; clip-path: polygon(0 0, 100% 5px, 100% 56px, 0 100%); }
  .fold.right { right: 0; clip-path: polygon(0 5px, 100% 0, 100% 100%, 0 56px); }
  .strip { position: absolute; top: 0; right: 0; display: flex; flex-direction: column; align-items: center; width: 33px; padding: 7px 1px 8px 0; background: #fff; border: 1px solid #ccc; border-radius: 0 0 3px 3px; }
  .strip button { display: grid; place-items: center; width: 30px; height: 29px; }
  .strip .m { height: 39px; grid-template-rows: 29px 10px; }
  .strip hr { width: 23px; height: 1px; margin: 2px 0; border: 0; background: #4a5163; }

  /* layer display */
  .layers { flex: none; width: 280px; margin-left: 4px; }
  .ltabs { flex: none; display: flex; gap: 3px; height: 25px; padding: 2px 2px 0; border-bottom: 1px solid #c4c8d0; }
  .ltabs button { height: 21px; margin-top: 1px; padding: 0 6px; border-radius: 4px 4px 0 0; background: #dcdcdc; color: #555; }
  .ltabs .on { height: 23px; margin-top: 0; background: #fff; color: #1a73e8; border: 1px solid #c4c8d0; border-bottom: 0; }
  .lbox { flex: 1; min-height: 0; display: flex; overflow: hidden; margin: 3px 1px 0 2px; border: 1px solid #d8d8d8; }
  table { width: 260px; flex: 1; table-layout: fixed; border-collapse: separate; border-spacing: 0; height: fit-content; }
  th, td { height: 21px; padding: 0; border: 0 solid #d8d8d8; border-width: 0 1px 1px 0; font-weight: 400; overflow: hidden; }
  td:first-child { border-left-width: 1px; }
  .c { width: 63px; text-align: center; }
  .cell { display: flex; align-items: center; height: 20px; white-space: nowrap; }
  .lv0 { padding-left: 1px; gap: 6px; }
  .guide { width: 8px; height: 20px; border-right: 1px solid #dcdcdc; }
  .guide.two { width: 10px; }
  .guide.last { height: 10px; align-self: flex-start; }
  .dash { width: 16px; height: 1px; margin-right: 6px; background: #dcdcdc; }
  .fold1 { display: grid; place-items: center; width: 13px; height: 13px; border: 1px solid #777; border-radius: 2px; background: #fff; }
  .fold1::before { content: ""; width: 5px; height: 1px; background: #444; }
  .lv0 .fold1 { background: #d4d4d4; }
  .lv1 .fold1 { margin: 0 6px 0 3px; }
  input[type="checkbox"] { appearance: none; display: inline-grid; place-items: center; width: 14px; height: 14px; vertical-align: middle; border: 1px solid #858585; border-radius: 2px; background: #fff; }
  input[type="checkbox"]:disabled { background: #eee; border-color: #bbb; }
  input[type="checkbox"]:checked { background: #2b7de0; border-color: #2b7de0; }
  input[type="checkbox"]:checked::before { content: ""; width: 9px; height: 5px; margin-bottom: 3px; border: solid #fff; border-width: 0 0 2px 2px; transform: rotate(-48deg); }
  input[type="checkbox"]:indeterminate::before { content: ""; width: 10px; height: 10px; background: #9ac6fb; border: 1px solid #3b8ae8; }
  .lbox .bar { height: 157px; margin: 12px 4px 0 5px; }
  .foot { flex: none; display: flex; justify-content: flex-end; padding: 7px 7px 6px; }
  .foot button { width: 90px; height: 26px; border: 1px solid #c4c4c4; border-radius: 3px; }

  /* status bar */
  .status { flex: none; display: flex; align-items: center; height: 31px; padding: 0 11px 0 2px; background: #fcfcfc; white-space: nowrap; }
  .s1 { width: 90px; } .s2 { width: 140px; } .s3 { width: 111px; } .s4 { width: 109px; }
  .modes { display: flex; gap: 3px; }
  .modes button { display: flex; align-items: center; justify-content: center; gap: 6px; width: 25px; height: 25px; border: 1px solid #8a8a8a; border-radius: 3px; }
  .modes button:has(.tri) { width: 36px; }
  .modes .on { background: #d8e6fb; border-color: #3b82e0; }
  .modes .dim { margin: 0 3px; border-color: #bbb; }
  .hint { display: flex; align-items: center; gap: 3px; margin: 0 auto 0 16px; }
  .note { display: flex; align-items: center; gap: 6px; margin-left: 13px; }

  /* taskbar */
  footer {
    flex: none; display: flex; align-items: center; height: 40px; border-top: 1px solid #12304c;
    background:
      linear-gradient(to top right, transparent 34%, rgba(190, 225, 255, .75) 50%, transparent 66%) 71% 0 / 80px 40px no-repeat,
      linear-gradient(rgba(255, 255, 255, .25), transparent 3px),
      linear-gradient(90deg, #1f5a8c 0, #3a8fc2 8%, #58b0dc 21%, #4aa4d6 30%, #3090cb 35%, #2f86c6 50%, #2677bb 62%, #2068b0 74%, #17508f 78%, #16447f 92%, #14335f);
  }
  .orb { margin-left: 8px; }
  .dots { margin: 0 9px 0 12px; }
  .task { display: grid; place-items: center; width: 60px; height: 38px; margin-right: 2px; border: 1px solid #1c4f78; border-radius: 3px; background: linear-gradient(135deg, rgba(255, 255, 255, .4), rgba(255, 255, 255, .1)); box-shadow: inset 0 0 0 1px rgba(255, 255, 255, .4); }
  .task.on { background: linear-gradient(135deg, rgba(255, 255, 255, .8), rgba(255, 255, 255, .45)); }
  .tray { display: flex; align-items: center; gap: 8px; margin-left: auto; color: #fff; }
  .tray .dots { margin: 0; }
  .clock { display: flex; flex-direction: column; align-items: center; width: 78px; line-height: 17px; }
  .desk { width: 14px; height: 39px; margin-left: 4px; border: 1px solid #6f93b8; background: linear-gradient(135deg, rgba(255, 255, 255, .3), transparent); }
</style>
